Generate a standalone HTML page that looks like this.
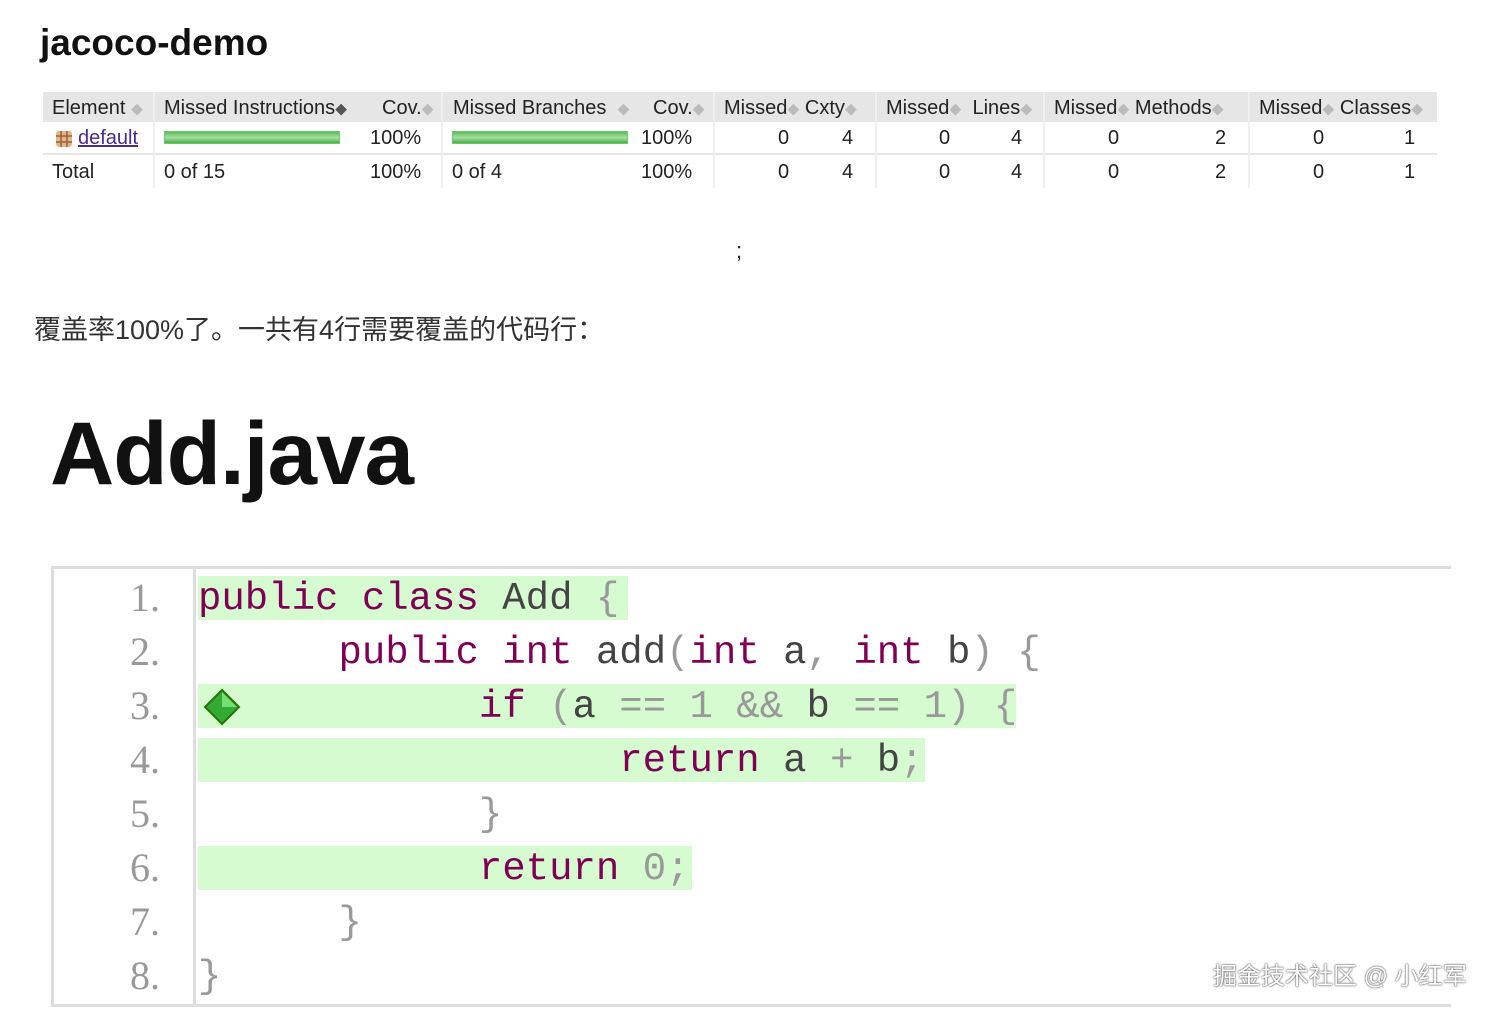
<!DOCTYPE html>
<html><head><meta charset="utf-8"><style>
*{margin:0;padding:0;box-sizing:border-box}
body{width:1500px;height:1012px;background:#fff;position:relative;overflow:hidden;font-family:"Liberation Sans","Noto Sans CJK SC",sans-serif;color:#222}
.a{position:absolute;white-space:pre}
.t{font-size:20px;line-height:30px}
.vl{position:absolute;width:2px;background:#f0f0f0;top:92px;height:96px}
.s{color:#bbb;font-size:12px}
.bar{position:absolute;height:13px;background:linear-gradient(#5cb85c,#a8e0a0 50%,#4caf50);border:1px solid #6c6}
.code{font-family:"Liberation Mono",monospace;font-size:39px;line-height:54px;color:#444}
.k{color:#7f0055}
.p{color:#999}
.hl{position:absolute;background:#d6fbd0;height:44px}
.ln{position:absolute;left:60px;width:100px;text-align:right;font-family:"Liberation Serif",serif;font-size:40px;color:#999}
</style></head><body>
<div class="a" style="left:40px;top:22px;font-size:37px;font-weight:bold;color:#111">jacoco-demo</div>
<div class="a" style="left:43px;top:92px;width:1394px;height:30px;background:#e6e6e6"></div>
<div class="a" style="left:43px;top:153px;width:1394px;height:2px;background:#e6e6e6"></div>
<div class="vl" style="left:153px"></div><div class="vl" style="left:441px"></div><div class="vl" style="left:713px"></div><div class="vl" style="left:875px"></div><div class="vl" style="left:1043px"></div><div class="vl" style="left:1248px"></div>
<div class="a t" style="left:52px;top:93px">Element <span class="s">◆</span></div>
<div class="a t" style="left:164px;top:93px">Missed Instructions<span style="font-size:12px;color:#555">◆</span></div>
<div class="a t" style="left:382px;top:93px">Cov.<span class="s">◆</span></div>
<div class="a t" style="left:453px;top:93px">Missed Branches  <span class="s">◆</span></div>
<div class="a t" style="left:653px;top:93px">Cov.<span class="s">◆</span></div>
<div class="a t" style="left:724px;top:93px">Missed<span class="s">◆</span> Cxty<span class="s">◆</span></div>
<div class="a t" style="left:886px;top:93px">Missed<span class="s">◆</span>  Lines<span class="s">◆</span></div>
<div class="a t" style="left:1054px;top:93px">Missed<span class="s">◆</span> Methods<span class="s">◆</span></div>
<div class="a t" style="left:1259px;top:93px">Missed<span class="s">◆</span> Classes<span class="s">◆</span></div>
<svg class="a" style="left:55px;top:130px" width="18" height="18"><rect x="1" y="1" width="16" height="16" rx="3" fill="#e0b890"/><path d="M6 1V17M12 1V17M1 6H17M1 12H17" stroke="#a06030" stroke-width="1.5"/></svg>
<div class="a t" style="left:78px;top:123px;color:#4a2a8a;text-decoration:underline">default</div>
<div class="bar" style="left:164px;top:131px;width:176px"></div>
<div class="bar" style="left:452px;top:131px;width:176px"></div>
<div class="a t" style="left:370px;top:123px">100%</div>
<div class="a t" style="left:641px;top:123px">100%</div>
<div class="a t" style="left:52px;top:157px">Total</div>
<div class="a t" style="left:164px;top:157px">0 of 15</div>
<div class="a t" style="left:370px;top:157px">100%</div>
<div class="a t" style="left:452px;top:157px">0 of 4</div>
<div class="a t" style="left:641px;top:157px">100%</div>
<div class="a t" style="left:778px;top:123px">0</div><div class="a t" style="left:842px;top:123px">4</div><div class="a t" style="left:939px;top:123px">0</div><div class="a t" style="left:1011px;top:123px">4</div><div class="a t" style="left:1108px;top:123px">0</div><div class="a t" style="left:1215px;top:123px">2</div><div class="a t" style="left:1313px;top:123px">0</div><div class="a t" style="left:1404px;top:123px">1</div>
<div class="a t" style="left:778px;top:157px">0</div><div class="a t" style="left:842px;top:157px">4</div><div class="a t" style="left:939px;top:157px">0</div><div class="a t" style="left:1011px;top:157px">4</div><div class="a t" style="left:1108px;top:157px">0</div><div class="a t" style="left:1215px;top:157px">2</div><div class="a t" style="left:1313px;top:157px">0</div><div class="a t" style="left:1404px;top:157px">1</div>
<div class="a" style="left:736px;top:238px;font-size:22px">;</div>
<div class="a" style="left:34px;top:308px;font-size:27px;color:#333">覆盖率100%了。一共有4行需要覆盖的代码行：</div>
<div class="a" style="left:50px;top:402px;font-size:89px;font-weight:bold;color:#111;letter-spacing:-1px">Add.java</div>
<div class="a" style="left:51px;top:566px;width:1400px;height:441px;border:3px solid #ddd;border-right:none"></div>
<div class="a" style="left:193px;top:569px;width:3px;height:436px;background:#ddd"></div>
<div class="hl" style="left:198px;top:576px;width:430px"></div>
<div class="hl" style="left:198px;top:684px;width:818px"></div>
<div class="hl" style="left:198px;top:738px;width:727px"></div>
<div class="hl" style="left:198px;top:846px;width:494px"></div>
<div class="ln" style="top:574px">1.</div><div class="ln" style="top:628px">2.</div><div class="ln" style="top:682px">3.</div><div class="ln" style="top:736px">4.</div><div class="ln" style="top:790px">5.</div><div class="ln" style="top:844px">6.</div><div class="ln" style="top:898px">7.</div><div class="ln" style="top:952px">8.</div>
<svg class="a" style="left:203px;top:688px" width="38" height="38"><path d="M19 2L36 19L19 36L2 19Z" fill="#3a3" stroke="#270" stroke-width="2"/><path d="M19 4L34 19L19 19Z" fill="#7d7"/></svg>
<div class="a code" style="left:198px;top:572px"><span class="k">public class</span> Add <span class="p">{</span>
      <span class="k">public int</span> add<span class="p">(</span><span class="k">int</span> a<span class="p">,</span> <span class="k">int</span> b<span class="p">)</span> <span class="p">{</span>
            <span class="k">if</span> <span class="p">(</span>a <span class="p">==</span> <span class="p">1</span> <span class="p">&amp;&amp;</span> b <span class="p">==</span> <span class="p">1)</span> <span class="p">{</span>
                  <span class="k">return</span> a <span class="p">+</span> b<span class="p">;</span>
            <span class="p">}</span>
            <span class="k">return</span> <span class="p">0;</span>
      <span class="p">}</span>
<span class="p">}</span></div>
<div class="a" style="left:1213px;top:956px;font-size:24px;color:#fff;text-shadow:0 0 2px #555,0 0 1px #333">掘金技术社区 @ 小红军</div>
</body></html>
